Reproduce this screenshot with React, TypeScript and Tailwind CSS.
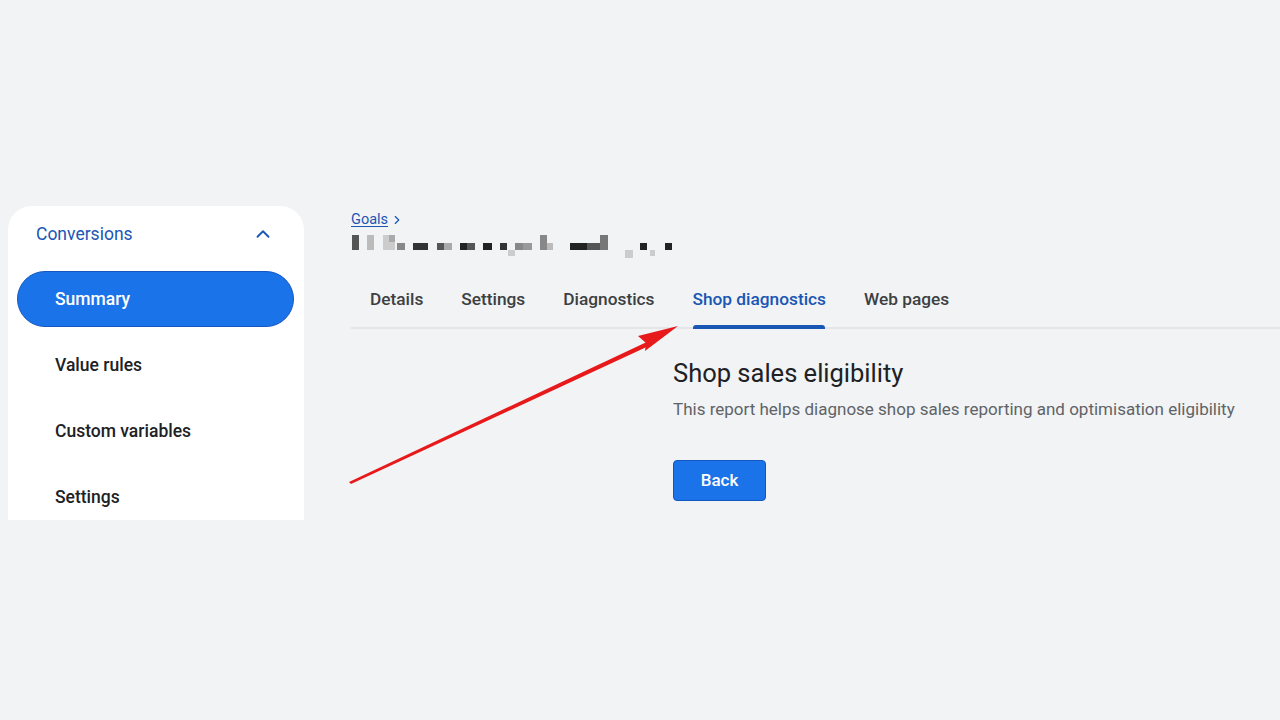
import { ChevronUp, ChevronRight } from "lucide-react";

const navItems = ["Summary", "Value rules", "Custom variables", "Settings"];
const tabs = ["Details", "Settings", "Diagnostics", "Shop diagnostics", "Web pages"];

// pixelated (redacted) page title: [x, y, w, h, colour]
const pixels: [number, number, number, number, string][] = [
  [1, 1, 7, 15, "#555"],
  [16, 1, 7, 15, "#bbb"],
  [32, 1, 12, 15, "#ccc"],
  [38, 1, 6, 7, "#aaa"],
  [46, 9, 8, 7, "#888"],
  [62, 9, 15, 7, "#333"],
  [86, 9, 7, 7, "#555"],
  [93, 9, 8, 7, "#aaa"],
  [109, 9, 7, 7, "#222"],
  [116, 9, 8, 7, "#555"],
  [132, 9, 9, 7, "#222"],
  [149, 9, 7, 7, "#333"],
  [157, 16, 7, 6, "#ccc"],
  [164, 9, 8, 7, "#888"],
  [172, 9, 9, 7, "#999"],
  [189, 1, 7, 15, "#888"],
  [196, 9, 6, 7, "#bbb"],
  [219, 9, 17, 7, "#222"],
  [236, 9, 13, 7, "#555"],
  [249, 1, 8, 15, "#777"],
  [274, 16, 8, 8, "#ccc"],
  [289, 9, 7, 7, "#222"],
  [299, 16, 5, 6, "#ccc"],
  [314, 9, 7, 7, "#222"],
];

export default function App() {
  return (
    <div
      className="relative h-[720px] w-[1280px] overflow-hidden bg-[#f1f3f4] pt-[206px]"
      style={{ fontFamily: "Roboto, 'Noto Sans', sans-serif" }}
    >
      <div className="flex">
        {/* Sidebar */}
        <div className="ml-2 h-[314px] w-[296px] shrink-0 overflow-hidden rounded-t-[24px] bg-white">
          <div className="flex h-[56px] items-center justify-between pl-7 pr-[30px]">
            <span className="text-[17.5px] text-[#1a56b4]">Conversions</span>
            <ChevronUp size={22} strokeWidth={2} className="text-[#1a56b4]" />
          </div>
          <div className="mt-[4px]">
            {navItems.map((item, i) => (
              <div key={item} className="flex h-[66px] items-center pl-[9px] pr-[10px]">
                <div
                  className={
                    i === 0
                      ? "flex h-[56px] w-full items-center rounded-full border border-[#1557c0] bg-[#1a73e8] pl-[37px] pt-px text-[17.5px] font-medium text-white"
                      : "flex h-[56px] w-full items-center pl-[38px] pt-px text-[17.5px] font-medium text-[#202124]"
                  }
                >
                  {item}
                </div>
              </div>
            ))}
          </div>
        </div>

        {/* Main */}
        <div className="ml-[47px] flex-1 pt-[4px]">
          <div className="flex h-5 items-center text-[14.5px] text-[#1a56b4]">
            <span className="underline underline-offset-2">Goals</span>
            <ChevronRight size={14} strokeWidth={2} className="ml-[2px]" />
          </div>
          <svg width="325" height="24" className="mt-[4px] block">
            {pixels.map(([x, y, w, h, c], i) => (
              <rect key={i} x={x} y={y} width={w} height={h} fill={c} />
            ))}
          </svg>

          <div className="mt-[13px] flex border-b-2 border-[#e3e5e8]">
            {tabs.map((t) => {
              const active = t === "Shop diagnostics";
              return (
                <div
                  key={t}
                  className={
                    active
                      ? "relative flex h-[56px] items-center px-[19px] pt-[2px] text-[17.3px] font-medium text-[#1a56b4]"
                      : "relative flex h-[56px] items-center px-[19px] pt-[2px] text-[17.3px] font-medium text-[#3c4043]"
                  }
                >
                  {t}
                  {active && (
                    <div className="absolute bottom-[-2px] left-[20px] right-[20px] h-[4px] rounded-t-[3px] bg-[#1a56b4]" />
                  )}
                </div>
              );
            })}
          </div>

          <div className="ml-[322px] pt-[28px]">
            <h1 className="text-[25.5px] leading-[32px] text-[#202124]">Shop sales eligibility</h1>
            <p className="mt-[8px] text-[17px] leading-[24px] text-[#5f6368]">
              This report helps diagnose shop sales reporting and optimisation eligibility
            </p>
            <button className="mt-[39px] flex h-[41px] w-[93px] items-center justify-center rounded-[4px] border border-[#1557c0] bg-[#1a73e8] text-[17px] font-medium text-white">
              Back
            </button>
          </div>
        </div>
      </div>

      {/* Red annotation arrow */}
      <svg className="pointer-events-none absolute left-0 top-0" width="1280" height="720">
        <polygon points="349,482 651,340 653,344 351,484" fill="#e8191a" />
        <polygon points="678,326 638,336 646,343 645,351" fill="#e8191a" />
      </svg>
    </div>
  );
}
